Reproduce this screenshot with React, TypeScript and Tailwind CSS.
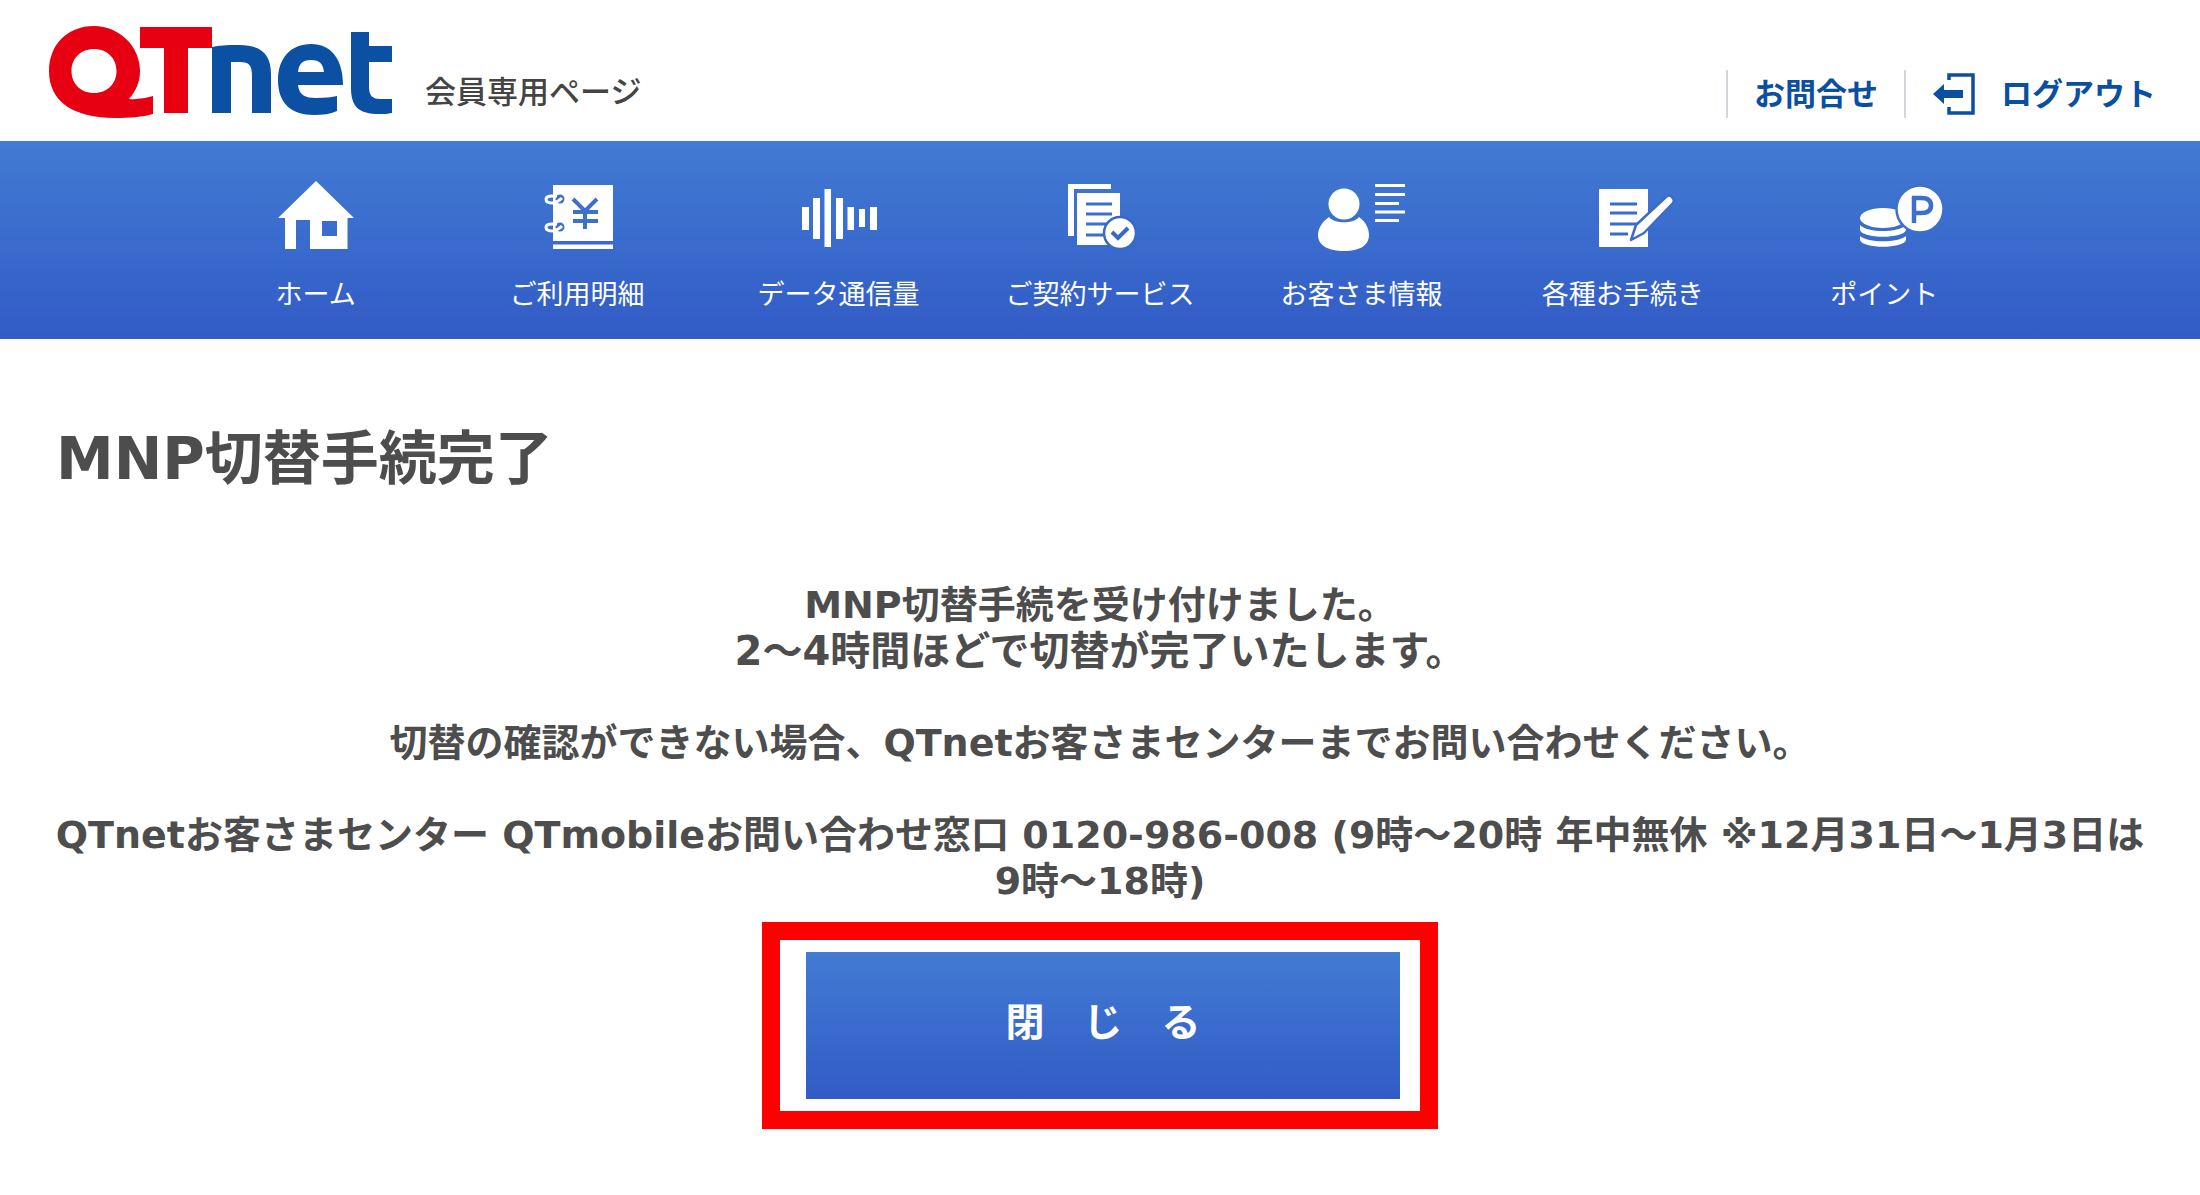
import type { ReactNode } from "react"

interface NavItem {
  label: string
  icon: ReactNode
}

const navItems: NavItem[] = [
  {
    label: "ホーム",
    icon: (
      <svg viewBox="0 0 76 72" className="h-[72px] w-[76px]" fill="currentColor" aria-hidden="true">
        <path d="M38 2 76 39H69.500V70H32V41H18V70H7V39H0Z M44 42V57H59V42Z" fillRule="evenodd" />
      </svg>
    ),
  },
  {
    label: "ご利用明細",
    icon: (
      <svg viewBox="-3 0 71 72" className="h-[72px] w-[71px]" aria-hidden="true">
        <path d="M8 6H68V62H8ZM8 65.500H68V70H8Z" fill="currentColor" />
        <g stroke="#3d6fcd" strokeWidth="4" fill="none">
          <path d="M28 20 40 32 52 20M28 33H53M28 42H53M40 31V50" />
        </g>
        <g fill="#3d6fcd">
          <circle cx="15" cy="20" r="4.500" />
          <circle cx="15" cy="48" r="4.500" />
        </g>
        <g stroke="currentColor" strokeWidth="3" fill="none">
          <path d="M17 19Q13 23 8 24Q1 24 1 20.500T7 17H12M17 47Q13 51 8 52Q1 52 1 48.500T7 45H12" />
        </g>
      </svg>
    ),
  },
  {
    label: "データ通信量",
    icon: (
      <svg viewBox="-3 0 79 72" className="h-[72px] w-[79px]" fill="currentColor" aria-hidden="true">
        <path d="M0 28H7V51H0ZM11 19H18V60H11ZM22.500 10H29V68H22.500ZM34 19H41V60H34ZM45.500 28H52V51H45.500ZM57 30H63V48H57ZM68 28H75V51H68Z" />
      </svg>
    ),
  },
  {
    label: "ご契約サービス",
    icon: (
      <svg viewBox="-5 0 73 72" className="h-[72px] w-[73px]" aria-hidden="true">
        <path d="M0 5H43V10H6V57H0ZM9 14H52V66H9Z" fill="currentColor" />
        <path d="M18 25H44M18 35H44M18 45H44M18 56H44" stroke="#3d6fcd" strokeWidth="3" />
        <circle cx="52" cy="54" r="16" fill="currentColor" stroke="#3968c9" strokeWidth="2.500" />
        <path d="M44 53 50 59 60 49" stroke="#3968c9" strokeWidth="4" fill="none" />
      </svg>
    ),
  },
  {
    label: "お客さま情報",
    icon: (
      <svg viewBox="-2 0 90 72" className="h-[72px] w-[90px]" fill="currentColor" aria-hidden="true">
        <path d="M11 38C16 45 36 45 41 38C47 42 51 49 51 56C51 67 41 72 26 72S0 67 0 56C0 49 5 42 11 38Z" />
        <circle cx="26" cy="25" r="15.500" />
        <path d="M57 5H87V8H57ZM57 14H87V17H57ZM57 23H81V26H57ZM57 31.500H87V34.500H57ZM57 40H81V43H57Z" />
      </svg>
    ),
  },
  {
    label: "各種お手続き",
    icon: (
      <svg viewBox="-28 0 104 72" className="h-[72px] w-[104px]" aria-hidden="true">
        <path d="M0 10H49V68H0Z" fill="currentColor" />
        <path d="M11 25H38M11 34H38M11 45H38M11 55H29" stroke="#3b6bcb" strokeWidth="3" />
        <path
          d="M32 61 37 46 67 18Q70 15 73 18T74 24L45 54Z"
          fill="currentColor"
          stroke="#3b6bcb"
          strokeWidth="2.500"
          strokeLinejoin="round"
        />
      </svg>
    ),
  },
  {
    label: "ポイント",
    icon: (
      <svg viewBox="-36 0 120 72" className="h-[72px] w-[120px]" aria-hidden="true">
        <g fill="currentColor">
          <path d="M0 57C8 64 38 64 46 57V61C44 70 2 70 0 61Z" />
          <path d="M0 46C8 54 38 54 46 46V51C44 60 2 60 0 51Z" />
          <ellipse cx="23" cy="39" rx="23" ry="10" />
        </g>
        <circle cx="60" cy="30" r="23.500" fill="currentColor" stroke="#3d6fcd" strokeWidth="2.500" />
        <path d="M54 44V19H61Q71 19 71 26.500T61 34H54" stroke="#3d6fcd" strokeWidth="4.500" fill="none" />
      </svg>
    ),
  },
]

function Logo() {
  return (
    <svg viewBox="0 0 344 92" className="h-[92px] w-[344px]" role="img" aria-label="QTnet">
      <g fill="#e60012" fillRule="evenodd">
        <path d="M45 0C70 0 91 20 91 45C91 56 87 65 80 73Q92 74 104 70V88C94 91 80 92 66 92C25 92 0 76 0 45C0 19 18 0 45 0ZM45 23C32 23 22.500 32 22.500 45S32 67 45 67S67.500 58 67.500 45S58 23 45 23Z" />
        <path d="M91 1H163V22H139V87H115V22H91Z" />
      </g>
      <g fill="#0b50a2" fillRule="evenodd">
        <path d="M163 21C174 19 182 19 190 19C212 19 222 28 222 48V87H203V50C203 39 200 36 191 36H182V87H163Z" />
        <path d="M262 18C282 18 294 33 294 59H249C250 69 256 72 267 72C276 72 283 71 288 70V85C281 88 274 89 265 89C242 89 229 77 229 54C229 32 242 18 262 18ZM249 46H275C274 38 271 34 262 34S250 38 249 46Z" />
        <path d="M302 6H320V20H343V36H320V61C320 70 324 73 331 73H343V87C339 88 335 88 330 88C310 88 302 81 302 62Z" />
      </g>
    </svg>
  )
}

function LogoutIcon() {
  return (
    <svg viewBox="0 0 42 42" className="h-[42px] w-[42px]" aria-hidden="true">
      <path d="M16 7V2H40V40H16V34" fill="none" stroke="#0b4fa0" strokeWidth="3.500" />
      <path d="M0 21 11 11V17H30V25H11V31Z" fill="#0b4fa0" />
    </svg>
  )
}

export default function App() {
  return (
    <div className="min-h-screen bg-white font-['DejaVu_Sans','Noto_Sans_CJK_JP',sans-serif] text-[#4d4d4d]">
      <header className="flex h-[141px] items-start justify-between pr-11 pl-[49px]">
        <div className="flex items-start gap-8 pt-[26px]">
          <Logo />
          <p className="pt-[50px] text-[31px] leading-8 font-medium text-[#444]">会員専用ページ</p>
        </div>
        <div className="flex items-center pt-[70px] text-[31px] leading-[48px] font-bold text-[#0b4fa0]">
          <a href="#contact" className="border-l-2 border-gray-300 px-[26px]">お問合せ</a>
          <a href="#logout" className="flex items-center gap-[26px] border-l-2 border-gray-300 pl-[27px]">
            <LogoutIcon />
            ログアウト
          </a>
        </div>
      </header>

      <nav className="h-[198px] bg-linear-to-b from-[#427bd3] to-[#325bc6] px-[185px] text-white">
        <ul className="flex">
          {navItems.map((item) => (
            <li key={item.label} className="flex-1">
              <a href="#menu" className="flex flex-col items-center pt-[38px]">
                {item.icon}
                <span className="mt-[25px] text-[27px] leading-[38px] whitespace-nowrap">{item.label}</span>
              </a>
            </li>
          ))}
        </ul>
      </nav>

      <main className="px-10 pt-20">
        <h1 className="px-4 text-[58px] leading-[80px] font-bold">MNP切替手続完了</h1>
        <div className="mt-[83px] text-center text-[38px] leading-[46px] font-bold">
          <p>MNP切替手続を受け付けました。</p>
          <p className="text-[40px]">2～4時間ほどで切替が完了いたします。</p>
          <p className="mt-[46px]">切替の確認ができない場合、QTnetお客さまセンターまでお問い合わせください。</p>
          <p className="mt-[46px]">
            QTnetお客さまセンター QTmobileお問い合わせ窓口 0120-986-008 (9時～20時 年中無休 ※12月31日～1月3日は
            <br />
            9時～18時)
          </p>
        </div>
        <div className="mt-[18px] flex justify-center">
          <div className="border-[18px] border-[#ff0000] py-3 pr-5 pl-[26px]">
            <button
              type="button"
              className="h-[147px] w-[594px] bg-linear-to-b from-[#427bd3] to-[#325bc6] pb-1 text-[39px] font-bold text-white"
            >
              閉　じ　る
            </button>
          </div>
        </div>
      </main>
    </div>
  )
}
